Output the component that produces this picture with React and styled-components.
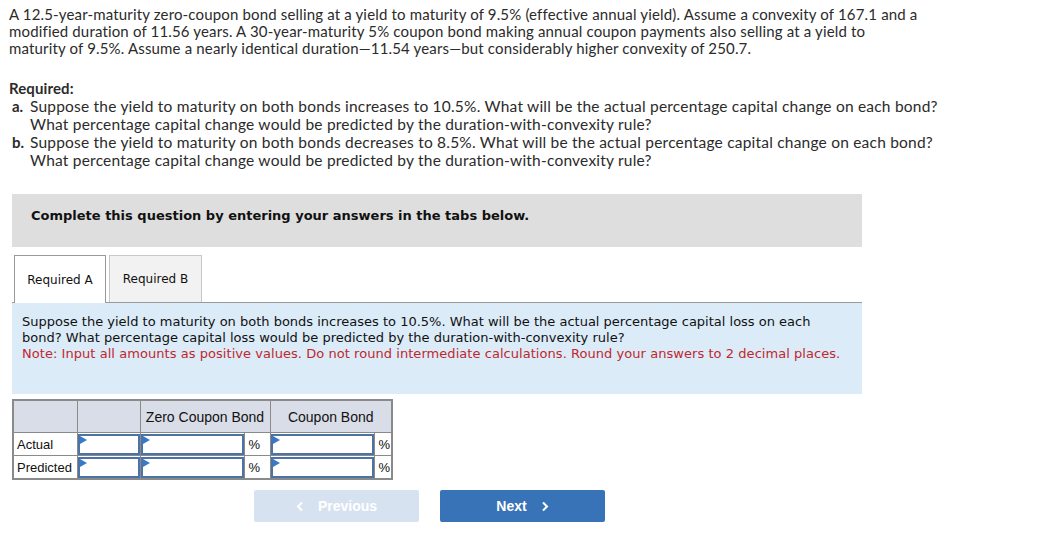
import React from 'react';
import styled, { createGlobalStyle } from 'styled-components';

const GlobalStyle = createGlobalStyle`
  body {
    margin: 0;
    background: #fff;
    color: #222;
  }
`

const Page = styled.div`
  width: 1045px;
  padding: 6px 0 0 9px;
  box-sizing: border-box;
`
const Intro = styled.p`
  margin: 0;
  white-space: nowrap;
  font-family: "Lato", "Open Sans", sans-serif;
  font-size: 15px;
  letter-spacing: 0.16px;
  line-height: 17px;
  color: #2b2b2b;
`
const Required = styled.div`
  margin-top: 22px;
  font-family: "Lato", "Open Sans", sans-serif;
  font-size: 15.5px;
  letter-spacing: 0.21px;
  line-height: 18px;
  color: #2b2b2b;
`
const ReqTitle = styled.div`
  font-weight: 700;
  font-size: 15px;
  letter-spacing: 0.1px;
`
const Item = styled.div`
  display: flex;
  padding-left: 3px;
`
const ItemLetter = styled.span`
  width: 18px;
  flex: none;
  font-weight: 700;
  font-size: 15px;
  letter-spacing: 0;
`
const ItemText = styled.span`
  white-space: nowrap;
`
const Banner = styled.div`
  margin: 25px 0 0 3px;
  width: 850px;
  height: 53px;
  background: #dedede;
  padding: 14px 0 0 19px;
  box-sizing: border-box;
  font-family: "DejaVu Sans", Verdana, sans-serif;
  font-weight: 700;
  font-size: 13px;
  line-height: 16px;
  color: #111;
`
const Tabs = styled.div`
  margin: 8px 0 0 3px;
  width: 850px;
  display: flex;
  gap: 3px;
  padding-left: 2px;
  box-sizing: border-box;
  border-bottom: 1px solid #9a9a9a;
`
const Tab = styled.div`
  width: ${p => p.w}px;
  box-sizing: border-box;
  display: flex;
  align-items: center;
  justify-content: center;
  font-family: "DejaVu Sans", Verdana, sans-serif;
  font-size: 12px;
  color: #111;
  background: ${p => (p.active ? '#fff' : '#f2f2f2')};
  border: 1px solid ${p => (p.active ? '#9a9a9a' : '#c8c8c8')};
  border-bottom: none;
  margin-bottom: ${p => (p.active ? '-1px' : '0')};
  height: ${p => (p.active ? '48px' : '47px')};
`
const InfoPanel = styled.div`
  margin-left: 3px;
  width: 850px;
  height: 91px;
  box-sizing: border-box;
  background: #dbebf8;
  padding: 11px 10px 0 10px;
  font-family: "DejaVu Sans", Verdana, sans-serif;
  font-size: 13px;
  line-height: 16px;
  color: #111;
  white-space: nowrap;
`
const Note = styled.div`
  color: #c1272d;
  letter-spacing: 0.05px;
`
const Table = styled.table`
  margin: 5px 0 0 3px;
  border-collapse: collapse;
  table-layout: fixed;
  width: 379px;
  border: 2px solid #8a8a8a;
  font-family: "Liberation Sans", Arial, sans-serif;
  font-size: 13px;
  color: #111;
`
const Th = styled.th`
  background: #d9dde7;
  border: 1px solid #8a8a8a;
  height: 31px;
  padding: 0;
  font-weight: 400;
  font-size: 14px;
`
const Td = styled.td`
  border: 1px solid #8a8a8a;
  height: 22px;
  padding: 0;
`
const RowLabel = styled(Td)`
  padding: 0 0 0 3px;
  white-space: nowrap;
`
const InputBox = styled.div`
  position: relative;
  height: 21px;
  box-sizing: border-box;
  border: 2px solid #4b73a5;
  background: #fff;
`
const Flag = styled.span`
  position: absolute;
  left: 0;
  top: 0;
  width: 0;
  height: 0;
  border-top: 4px solid transparent;
  border-bottom: 4px solid transparent;
  border-left: 7px solid #3a78c9;
`
const Pct = styled.td`
  border: 1px solid #8a8a8a;
  border-left: none;
  padding: 0 0 0 4px;
  font-size: 13px;
`
const Buttons = styled.div`
  display: flex;
  gap: 21px;
  margin: 10px 0 0 245px;
`
const NavButton = styled.div`
  width: 165px;
  height: 32px;
  border-radius: 2px;
  background: ${p => (p.disabled ? '#d7e2f0' : '#3873b8')};
  color: #fff;
  display: flex;
  align-items: center;
  justify-content: center;
  gap: 14px;
  font-family: "Liberation Sans", Arial, sans-serif;
  font-weight: 700;
  font-size: 14px;
`
const Chevron = ({ dir }) => (
  <svg width="8" height="11" viewBox="0 0 8 11">
    <path
      d={dir === 'left' ? 'M6 1.5 L2 5.5 L6 9.5' : 'M2 1.5 L6 5.5 L2 9.5'}
      fill="none"
      stroke="#fff"
      strokeWidth="2"
    />
  </svg>
)

const Cell = () => (
  <InputBox>
    <Flag />
  </InputBox>
)

const App = () => {
  return (
    <Page>
      <GlobalStyle />
      <Intro>
        A 12.5-year-maturity zero-coupon bond selling at a yield to maturity of 9.5% (effective annual yield). Assume a convexity of 167.1 and a
        <br />
        modified duration of 11.56 years. A 30-year-maturity 5% coupon bond making annual coupon payments also selling at a yield to
        <br />
        maturity of 9.5%. Assume a nearly identical duration—11.54 years—but considerably higher convexity of 250.7.
      </Intro>
      <Required>
        <ReqTitle>Required:</ReqTitle>
        <Item>
          <ItemLetter>a.</ItemLetter>
          <ItemText>
            Suppose the yield to maturity on both bonds increases to 10.5%. What will be the actual percentage capital change on each bond?
            <br />
            What percentage capital change would be predicted by the duration-with-convexity rule?
          </ItemText>
        </Item>
        <Item>
          <ItemLetter>b.</ItemLetter>
          <ItemText>
            Suppose the yield to maturity on both bonds decreases to 8.5%. What will be the actual percentage capital change on each bond?
            <br />
            What percentage capital change would be predicted by the duration-with-convexity rule?
          </ItemText>
        </Item>
      </Required>
      <Banner>Complete this question by entering your answers in the tabs below.</Banner>
      <Tabs>
        <Tab w={92} active>Required A</Tab>
        <Tab w={93}>Required B</Tab>
      </Tabs>
      <InfoPanel>
        Suppose the yield to maturity on both bonds increases to 10.5%. What will be the actual percentage capital loss on each
        <br />
        bond? What percentage capital loss would be predicted by the duration-with-convexity rule?
        <Note>Note: Input all amounts as positive values. Do not round intermediate calculations. Round your answers to 2 decimal places.</Note>
      </InfoPanel>
      <Table>
        <colgroup>
          <col style={{ width: 64 }} />
          <col style={{ width: 63 }} />
          <col style={{ width: 104 }} />
          <col style={{ width: 26 }} />
          <col style={{ width: 104 }} />
          <col style={{ width: 18 }} />
        </colgroup>
        <thead>
          <tr>
            <Th />
            <Th />
            <Th colSpan={2}>Zero Coupon Bond</Th>
            <Th colSpan={2}>Coupon Bond</Th>
          </tr>
        </thead>
        <tbody>
          {['Actual', 'Predicted'].map(label => (
            <tr key={label}>
              <RowLabel>{label}</RowLabel>
              <Td><Cell /></Td>
              <Td><Cell /></Td>
              <Pct>%</Pct>
              <Td><Cell /></Td>
              <Pct>%</Pct>
            </tr>
          ))}
        </tbody>
      </Table>
      <Buttons>
        <NavButton disabled>
          <Chevron dir="left" />
          Previous
        </NavButton>
        <NavButton>
          Next
          <Chevron dir="right" />
        </NavButton>
      </Buttons>
    </Page>
  );
};

export default App;
